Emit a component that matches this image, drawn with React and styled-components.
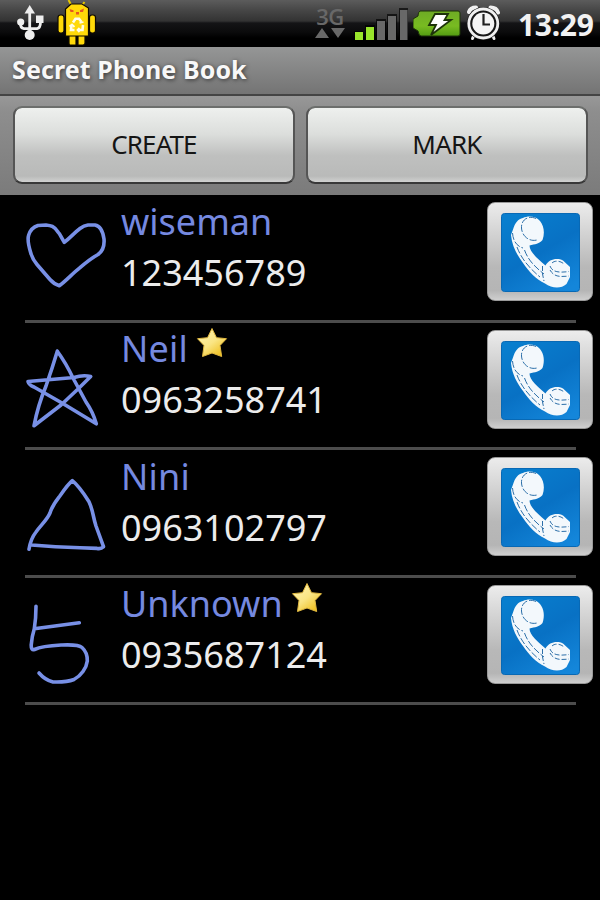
import React from "react";
import styled, { createGlobalStyle } from "styled-components";

const Global = createGlobalStyle`
  * { box-sizing: border-box; }
  html, body { margin: 0; background: #000; }
  body { font-family: "Noto Sans", "Open Sans", sans-serif; }
`;

const Screen = styled.main`
  width: 600px;
  height: 900px;
  overflow: hidden;
  background: #000;
  display: flex;
  flex-direction: column;
`;

const StatusBar = styled.header`
  height: 47px;
  flex: none;
  display: flex;
  background: linear-gradient(#5c5c5c 0, #474747 10px, #333 21px, #141416 23px, #0b0b0c 32px, #000 38px);
`;

const StatusIcon = styled.svg`
  display: block;
  flex: none;
  width: ${(p) => p.$w}px;
  height: 47px;
  margin-left: ${(p) => p.$gap}px;
`;

const NetworkLabel = styled.div`
  width: 32px;
  margin-left: 217px;
  display: flex;
  flex-direction: column;
  align-items: center;
  font: 600 22px/20px "Open Sans", "Noto Sans", sans-serif;
  letter-spacing: -0.6px;
  color: #686868;
  padding-top: 6px;
`;

const Arrows = styled.svg`
  display: block;
  flex: none;
  width: 32px;
  height: 12px;
  margin-top: 1px;
`;

const Clock = styled.time`
  margin-left: 18px;
  font-size: 30px;
  font-weight: 700;
  line-height: 49px;
  color: #f2f2f2;
  white-space: nowrap;
  letter-spacing: -0.3px;
`;

const TitleBar = styled.h1`
  margin: 0;
  height: 49px;
  flex: none;
  padding-left: 12px;
  background: linear-gradient(#959696, #747474);
  border-bottom: 2px solid #444;
  color: #f8f8f8;
  font-size: 25px;
  font-weight: 700;
  line-height: 45px;
  letter-spacing: 0.1px;
  text-shadow: 1px 1px 4px rgba(0, 0, 0, 0.6);
  white-space: nowrap;
`;

const ActionBar = styled.nav`
  height: 99px;
  flex: none;
  display: flex;
  gap: 11px;
  padding: 10px 12px 11px 13px;
  background: linear-gradient(#989898, #8e8e8e 15%, #7b7b7b);
`;

const ActionButton = styled.button`
  flex: 1;
  height: 78px;
  padding: 0 0 2px;
  border: 2px solid;
  border-color: #6c6e6c #555 #383838;
  border-radius: 9px;
  background: linear-gradient(#eef0ee 0, #dcdedc 35%, #bfc0bf 64%, #b9bab9 92%, #d0d1d0 100%) padding-box;
  color: #151515;
  font: 400 26px "Noto Sans", sans-serif;
  letter-spacing: ${(p) => p.$spacing}px;
`;

const ContactList = styled.ul`
  list-style: none;
  margin: 0;
  padding: 0;
`;

const ContactRow = styled.li`
  height: 127.5px;
  display: grid;
  grid-template-columns: 121px 1fr 113px;
  background: linear-gradient(#4c4c4c, #4c4c4c) 25px 100% / 551px 3px no-repeat;
`;

const Gesture = styled.svg`
  display: block;
  width: 121px;
  height: 124px;
  fill: none;
  stroke: #7890e6;
  stroke-width: 3.6px;
  stroke-linecap: round;
  stroke-linejoin: round;
`;

const Details = styled.div`
  display: flex;
  flex-direction: column;
  gap: 11px;
  padding-top: 6.5px;
`;

const NameLine = styled.div`
  height: 40px;
  display: flex;
  gap: 8px;
`;

const Name = styled.span`
  font-size: 36px;
  line-height: 40px;
  color: #7589e0;
  letter-spacing: ${(p) => p.$spacing}px;
`;

const Phone = styled.span`
  font-size: 36px;
  line-height: 40px;
  color: #ececec;
`;

const FavoriteIcon = styled.svg`
  display: block;
  width: 32px;
  height: 32px;
  margin-top: -2px;
`;

const CallButton = styled.button`
  width: 106px;
  height: 99px;
  margin-top: 7px;
  padding: 10px 0 0 13px;
  border: 1px solid #999;
  border-radius: 8px;
  background: linear-gradient(#ececec 0, #d8d8d8 25%, #b8b8b8 66%, #b5b5b5 90%, #cfcfcf);
  display: flex;
  align-items: flex-start;
`;

const CallIcon = styled.svg`
  display: block;
  width: 79px;
  height: 79px;
`;

const gestures = {
  heart: "M64.3 47.3C61 42 60 39 58 37C54 31 51 30.5 46 30L38 30.5C33 32 30 36 28.7 40C27 45 29 52 30.5 57C32 63 34 66 37 69.5L50 84.5Q54 89 59.3 90.7C66 86 72 79 80 72.7Q90 64 98 59.5C103 56 104.5 50 104 44C103 37 101 31 95 30H88Q84 30.5 80 33.5C74 38 70 43 64.3 47.3",
  star: "M57.3 28.2Q52 46 46 63Q38 82 34 102.8L61 82L78 66L90.7 53.5Q83 51.5 74 54.5L28 58.5Q29 62 34 64L62 80L96.3 100.8Q93 89 86 79L73 55Q66 40 57.3 28.2",
  triangle: "M29 99.3C30 93 32 87 36 82C41 75 47 70 50 63C52 56 56 51 59.5 46.5C64 40 68 34 72.3 30.7C79 36 84 44 89 51.7C93 60 93 67 96 76L103.5 96.7Q101 99.3 97 98.4L80 97.8Q55 97 31.7 95",
  five: "M36 28.2Q36 40 34.3 50.8L79.3 44.8M34.3 50.8Q32 58 31.2 67Q31 72.5 34.5 71.5C42 68 53 67.5 62 67C73 66.5 79 66.8 82 69.5C87 74 87.5 78 87.3 83C86.5 90 81 98 74 101.5C66 104.5 61 104 53 104Q45 102 39 95",
};

const contacts = [
  { name: "wiseman", phone: "123456789", gesture: "heart", spacing: 0 },
  { name: "Neil", phone: "0963258741", gesture: "star", spacing: 0.2, favorite: true },
  { name: "Nini", phone: "0963102797", gesture: "triangle", spacing: 0.2 },
  { name: "Unknown", phone: "0935687124", gesture: "five", spacing: 0, favorite: true },
];

function UsbIcon() {
  return (
    <StatusIcon $w={28} $gap={17} viewBox="0 0 28 47">
      <g stroke="#eee" strokeWidth="2.8" fill="none">
        <path d="M12.7 13V34M3.3 22Q3 28 7 28.7H20Q23.500 28 23.500 22" />
      </g>
      <g fill="#eee">
        <path d="M12.700 5L18 13.500H7.500Z" />
        <circle cx="3.700" cy="22" r="3.600" />
        <rect x="19" y="15.500" width="7.500" height="7.500" />
        <circle cx="12.700" cy="35" r="5" />
      </g>
    </StatusIcon>
  );
}

function RobotIcon() {
  return (
    <StatusIcon $w={40} $gap={12} viewBox="57 0 40 47">
      <g fill="#ffd909" stroke="#100a00" strokeWidth="1.200">
        <path d="M68.500 0L71 4.500M84.500 2L81.500 6" stroke="#e8c800" strokeWidth="2" />
        <rect x="58" y="15" width="6" height="18" rx="2.500" />
        <rect x="89.500" y="15" width="6" height="18" rx="2.500" />
        <path d="M69 34H76V45H70Q69 45 69 43ZM78 34H85V43Q85 45 83 45H78Z" />
        <path d="M65.500 14V9L71 4H82L88.500 8V36H65.500Z" />
      </g>
      <path d="M69.500 9L73.500 10.200V12H70.500ZM84 8.500L80 10.200V12H83ZM76 12H79V14.500H76Z" fill="#e65620" />
      <g fill="none" stroke="#fffde9" strokeWidth="2.600">
        <path d="M73 22.500L75.500 18.800H79L81.500 22M83 25L82.500 30H78M74.500 30H71L71.500 25.500" />
        <path d="M79.500 23L83.500 22M79.500 28L77.500 30L79.500 32M69.500 26.500L72 24.500L74.500 27" strokeWidth="1.800" />
      </g>
    </StatusIcon>
  );
}

function SignalIcon() {
  return (
    <StatusIcon $w={54} $gap={8} viewBox="354 0 54 47">
      <g fill="#000" opacity=".65">
        <path d="M354 31H363V41H354ZM365 25H375V41H365ZM376 19H386V41H376ZM387 14H397V41H387ZM399 8H408V41H399Z" />
      </g>
      <g fill="#99e52b">
        <rect x="355" y="32" width="8" height="8" /><rect x="366" y="27" width="8" height="13" />
      </g>
      <g fill="#686868">
        <rect x="377" y="21" width="8" height="19" /><rect x="388" y="16" width="8" height="24" /><rect x="400" y="10" width="7.500" height="30" />
      </g>
    </StatusIcon>
  );
}

function BatteryIcon() {
  return (
    <StatusIcon $w={48} $gap={5} viewBox="413 0 48 47">
      <defs>
        <linearGradient id="cell" x1="0" y1="0" x2="0" y2="1">
          <stop offset="0" stopColor="#6eab25" /><stop offset=".6" stopColor="#78bb21" /><stop offset="1" stopColor="#539b12" />
        </linearGradient>
      </defs>
      <path d="M420 11H458Q460 11 460 13V34Q460 36 458 36H421Q419 36 418 31L413 28V19L418 16Q418 12 420 11Z" fill="url(#cell)" stroke="#1d3309" />
      <path d="M435 14H448L444.500 20H451L431 35L436 25H429Z" fill="#fff" stroke="#1d3309" strokeWidth="1.800" />
    </StatusIcon>
  );
}

function AlarmIcon() {
  return (
    <StatusIcon $w={34} $gap={5} viewBox="466 0 34 47">
      <g fill="none" stroke="#f0f0f0" strokeLinecap="round">
        <path d="M469 12Q470.500 7.500 476 7.500M490.500 7.500Q496.500 7.500 498 12.500" strokeWidth="4" />
        <path d="M474 35L472.500 38.500M492.500 35L494 38.500" strokeWidth="3" />
      </g>
      <circle cx="483.300" cy="23.500" r="16.500" fill="#181818" />
      <circle cx="483.300" cy="23.500" r="14.500" fill="#181818" stroke="#f0f0f0" strokeWidth="2.800" />
      <circle cx="483.300" cy="23.500" r="11" fill="#f5f5f5" />
      <path d="M483.500 14V24.500H490" fill="none" stroke="#202020" strokeWidth="2.200" />
    </StatusIcon>
  );
}

function Favorite() {
  return (
    <FavoriteIcon viewBox="0 0 32 32">
      <defs>
        <linearGradient id="gold" x1=".1" y1=".1" x2=".8" y2="1">
          <stop offset="0" stopColor="#fff2ac" /><stop offset=".5" stopColor="#fae583" /><stop offset="1" stopColor="#eebd17" />
        </linearGradient>
      </defs>
      <path d="M16 1.500L20.500 10.700L30.500 11.700L24 18.500L25.700 29.500L16 26L6.500 29.500L8 18.500L1.500 11.700L11.500 10.700Z" fill="url(#gold)" stroke="#e0b840" strokeWidth="1" />
    </FavoriteIcon>
  );
}

function Handset() {
  return (
    <CallIcon viewBox="0 0 79 79">
      <defs>
        <linearGradient id="callBlue" x1=".2" y1="0" x2=".8" y2="1">
          <stop offset="0" stopColor="#087ece" /><stop offset=".5" stopColor="#0871c4" /><stop offset="1" stopColor="#1486da" />
        </linearGradient>
      </defs>
      <rect x=".5" y=".5" width="78" height="78" rx="3" fill="url(#callBlue)" stroke="#0869b5" />
      <path d="M22 5C27 2.500 35 3 39 8C43 13 44 20 41.500 27C38.500 31 34 31 28.500 32.500C28.500 39 37 46 44.500 52.500C48 46 56 44.500 62 47.500L69 54V64L65.500 71C60 76 51 75.500 44 70.500C35 66 28 59 22 50C16 42 11 33 10 22L12 16.500C14 10 17 6 22 5Z" fill="#f3f8fc" />
      <g fill="none" stroke="#2c6fa9" strokeWidth="1">
        <path d="M35 5.500C27 2 20 7 20.500 15C21 23 28 29 36 27" strokeDasharray="7 2" />
        <path d="M11.500 20C12 27 15 33 22 35M23.500 37C27 47 34 54 43 61M16 34C20 45 28 55 39 64" strokeDasharray="7 2" />
        <path d="M41.500 53V61L43 68M49 53C51 59 58 60 68 58.500M49 57C53 64 59 64 68 63M51 50C54 47 60 48 63 51" strokeDasharray="5 2" />
      </g>
    </CallIcon>
  );
}

export default function App() {
  return (
    <Screen>
      <Global />
      <StatusBar>
        <UsbIcon />
        <RobotIcon />
        <NetworkLabel>
          3G
          <Arrows viewBox="0 0 32 12"><path d="M1 11H15L8 1ZM17 1H31L24 11Z" fill="#686868" /></Arrows>
        </NetworkLabel>
        <SignalIcon />
        <BatteryIcon />
        <AlarmIcon />
        <Clock>13:29</Clock>
      </StatusBar>
      <TitleBar>Secret Phone Book</TitleBar>
      <ActionBar>
        <ActionButton $spacing={-0.9}>CREATE</ActionButton>
        <ActionButton $spacing={-0.8}>MARK</ActionButton>
      </ActionBar>
      <ContactList>
        {contacts.map((c) => (
          <ContactRow key={c.phone}>
            <Gesture viewBox="0 0 121 124"><path d={gestures[c.gesture]} /></Gesture>
            <Details>
              <NameLine>
                <Name $spacing={c.spacing}>{c.name}</Name>
                {c.favorite && <Favorite />}
              </NameLine>
              <Phone>{c.phone}</Phone>
            </Details>
            <CallButton aria-label={`Call ${c.name}`}><Handset /></CallButton>
          </ContactRow>
        ))}
      </ContactList>
    </Screen>
  );
}
